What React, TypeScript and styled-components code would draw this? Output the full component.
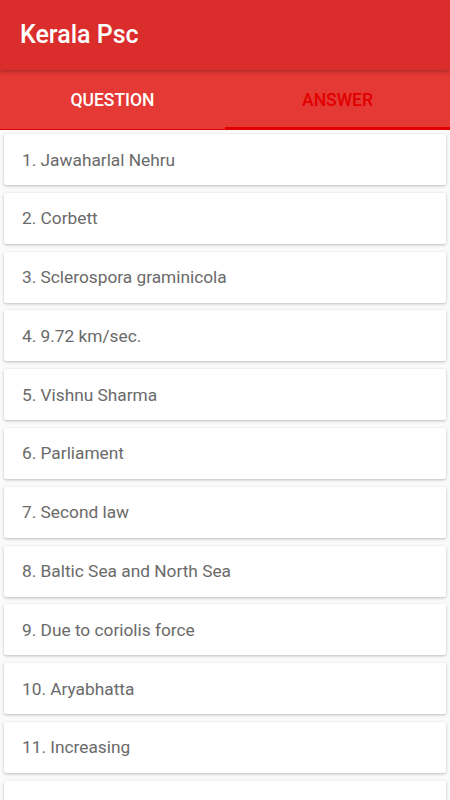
import styled, { createGlobalStyle } from 'styled-components'

const answers = [
  'Jawaharlal Nehru',
  'Corbett',
  'Sclerospora graminicola',
  '9.72 km/sec.',
  'Vishnu Sharma',
  'Parliament',
  'Second law',
  'Baltic Sea and North Sea',
  'Due to coriolis force',
  'Aryabhatta',
  'Increasing',
  'Solar system',
]

const GlobalStyle = createGlobalStyle`
  html, body {
    margin: 0;
    padding: 0;
    background: #fafafa;
    font-family: Roboto, 'Liberation Sans', sans-serif;
  }
`

export default function App() {
  return (
    <Screen>
      <GlobalStyle />
      <AppBar>
        <Title>Kerala Psc</Title>
      </AppBar>
      <Tabs>
        <Tab>QUESTION</Tab>
        <Tab $active>ANSWER</Tab>
      </Tabs>
      <List>
        {answers.map((a, i) => (
          <Card key={i}>
            {i + 1}. {a}
          </Card>
        ))}
      </List>
    </Screen>
  )
}

const Screen = styled.div`
  width: 450px;
  height: 800px;
  overflow: hidden;
  display: flex;
  flex-direction: column;
  background: #fafafa;
`
const AppBar = styled.div`
  height: 70px;
  flex-shrink: 0;
  background: #db2e2c;
  display: flex;
  align-items: center;
  padding: 0 20px;
  box-shadow: 0 2px 4px rgba(0, 0, 0, 0.25);
  position: relative;
  z-index: 2;
`
const Title = styled.span`
  color: #fff;
  font-size: 25px;
  font-weight: 500;
  margin-top: -2px;
`
const Tabs = styled.div`
  height: 60px;
  flex-shrink: 0;
  display: grid;
  grid-template-columns: 1fr 1fr;
  background: #e53935;
  border-bottom: 1px solid #e00000;
  box-sizing: border-box;
`
const Tab = styled.div<{ $active?: boolean }>`
  display: flex;
  align-items: center;
  justify-content: center;
  font-size: 17.5px;
  font-weight: 500;
  color: ${(p) => (p.$active ? '#e00000' : '#fff')};
  box-shadow: ${(p) => (p.$active ? 'inset 0 -2px 0 #e00000' : 'none')};
  padding-top: 1px;
`
const List = styled.div`
  display: flex;
  flex-direction: column;
  gap: 7.8px;
  padding: 4px 4px;
`
const Card = styled.div`
  height: 51px;
  flex-shrink: 0;
  background: #fff;
  border-radius: 2px;
  box-shadow: 0 1px 3px rgba(0, 0, 0, 0.25);
  display: flex;
  align-items: center;
  padding: 0 18px;
  font-size: 17.3px;
  color: #6a6a6a;
`
